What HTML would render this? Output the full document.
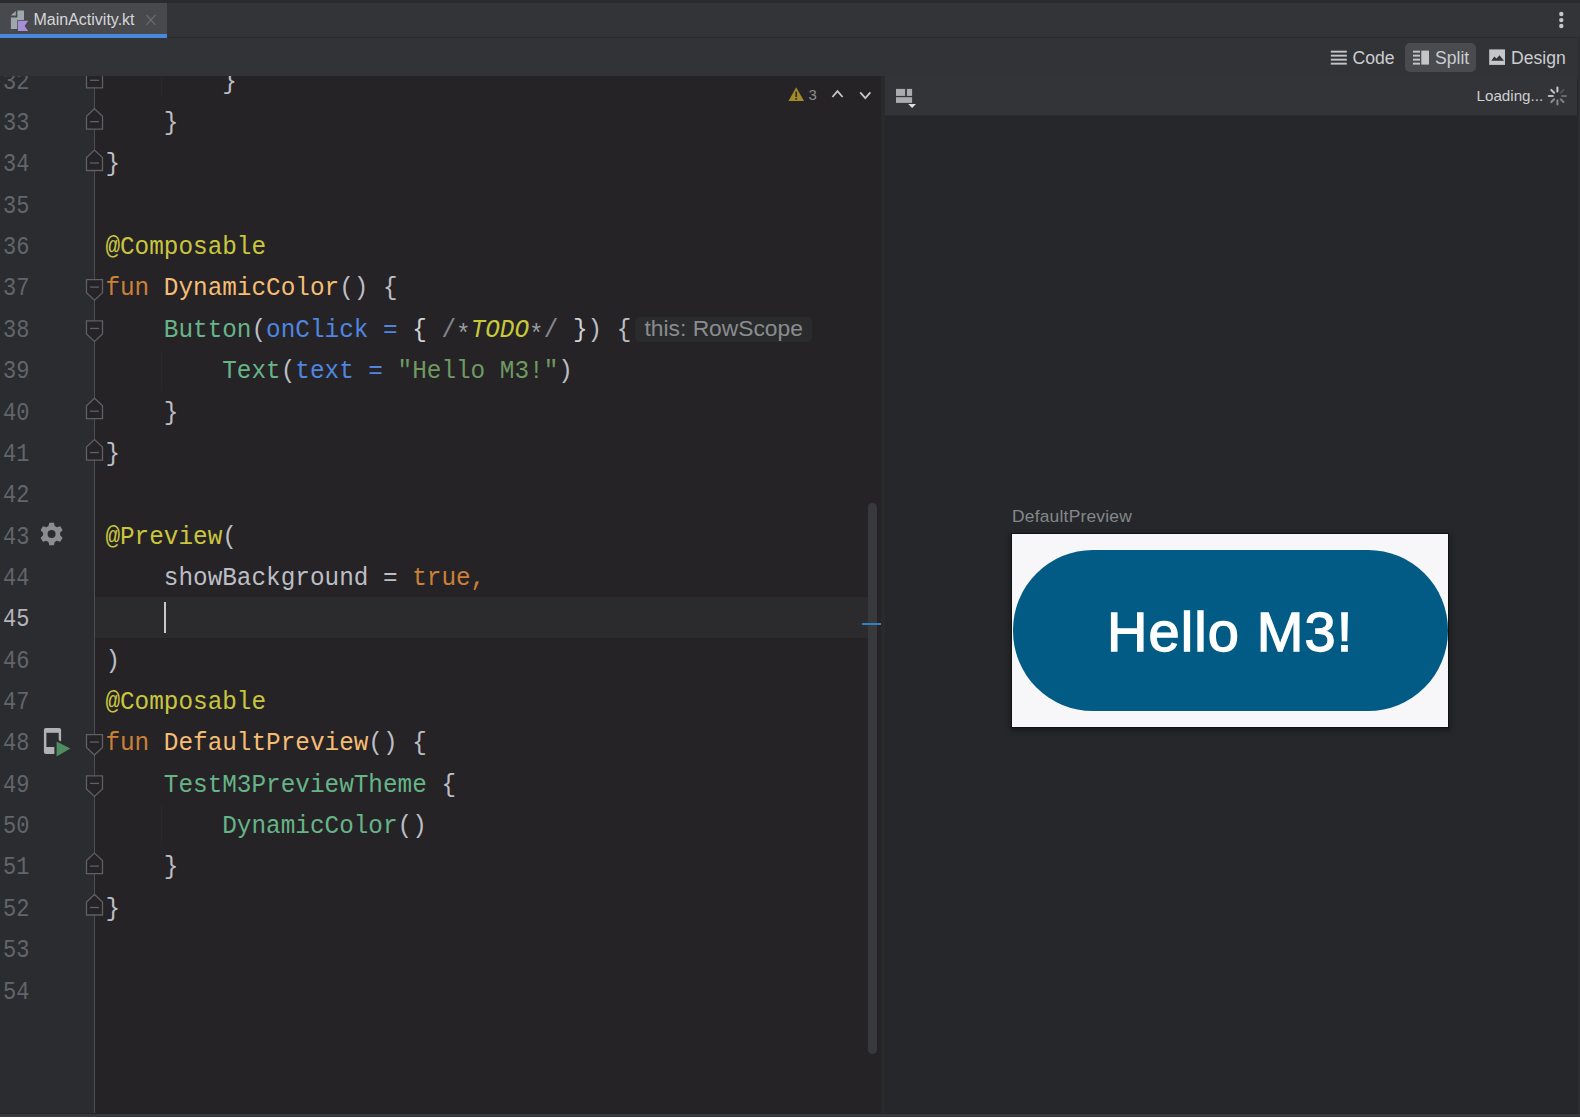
<!DOCTYPE html>
<html><head><meta charset="utf-8">
<style>
*{margin:0;padding:0;box-sizing:border-box}
html,body{width:1580px;height:1117px;overflow:hidden;background:#252326;font-family:"Liberation Sans",sans-serif;position:relative}
.abs{position:absolute}
#topbar{left:0;top:0;width:1580px;height:38px;background:#333438}
#topdark{left:0;top:0;width:1580px;height:3px;background:#2a2b2e}
#tab{left:0;top:3px;width:167px;height:35px;background:#48494c}
#tabline{left:0;top:34px;width:167px;height:4px;background:#4a88e0}
#tabtxt{left:33.5px;top:10.5px;font-size:16px;color:#d5d7da;white-space:nowrap;line-height:18px}
#toolbar{left:0;top:38px;width:1580px;height:38px;background:#323336}
#tbline{left:167px;top:37px;width:1413px;height:1px;background:#2b2c2f}
#editor{left:0;top:76px;width:881px;height:1037px;background:#252326;overflow:hidden}
#gutter{left:0;top:0;width:94px;height:1037px;background:#2b2c2f}
.ln{position:absolute;left:3px;font-family:"Liberation Mono",monospace;font-size:22px;color:#626569;line-height:41.36px;white-space:pre;transform:scaleY(1.18);transform-origin:0 20px}
.ln.cur{color:#b4b6b9}
.code{position:absolute;left:105.4px;font-family:"Liberation Mono",monospace;font-size:24.35px;color:#bcbec4;white-space:pre;line-height:41.36px;transform:scaleY(1.05);transform-origin:0 27.2px}
#curline{left:95px;top:521.3px;width:773px;height:40.6px;background:#2b2a2d}
#caret{left:163.5px;top:526px;width:2px;height:31px;background:#c8c8c8}
#divider{left:881px;top:76px;width:3.5px;height:1037px;background:#2a2a2d}
#right{left:885px;top:76px;width:695px;height:1037px;background:#26272a}
#ptool{left:884.5px;top:76px;width:692.5px;height:39.5px;background:#333438;border-bottom:1px solid #2b2c2f}
#rightedge{left:1578px;top:38px;width:2px;height:1076px;background:#2d2e31}
#bottom{left:0;top:1113.6px;width:1580px;height:3.4px;background:#37383b}
.p{color:#bcbec4}.k{color:#cc8038}.fn{color:#f5bd74}.an{color:#c9c63e}.cl{color:#66b488}.pn{color:#4f86e0}.st{color:#6e9a60}.cm{color:#85878b}.ast{color:#9a9ca0;position:relative;top:4.5px}.td{color:#c8c93a;font-style:italic}.br{color:#d0d2d6}
#hint{left:635px;top:317px;width:177px;height:24.5px;background:#2a2b2d;border-radius:5px}
#hinttxt{left:644.5px;top:316px;font-size:22.8px;color:#8a8c8f;line-height:24px;white-space:nowrap}
#scroll{left:868px;top:503px;width:9px;height:551px;background:#38393c;border-radius:5px}
#marker{left:862px;top:623px;width:19px;height:1.5px;background:#3281c4}
.ui{font-size:17.6px;color:#cbcdd0;white-space:nowrap;line-height:22px}
#btnsplit{left:1405px;top:42.5px;width:71px;height:29.5px;background:#4a4b4f;border-radius:5px}
#loading{left:1476.5px;top:87px;font-size:15.2px;color:#cdcfd2;line-height:18px;white-space:nowrap}
#warn3{left:808.5px;top:87px;font-size:15px;color:#8c8e91;line-height:16px}
#dpname{left:1012px;top:505.5px;font-size:17.4px;letter-spacing:0.22px;color:#85878a;line-height:20px;white-space:nowrap}
#card{left:1012px;top:533.8px;width:436px;height:193.2px;background:#f7f6f9;box-shadow:0 0 0 1px #111113, 0 2px 5px 2px rgba(0,0,0,0.35)}
#button{left:1012.5px;top:550px;width:435px;height:160.5px;background:#015b85;border-radius:80px}
#hello{left:1107px;top:601.5px;font-size:56px;color:#ffffff;line-height:60px;white-space:nowrap;-webkit-text-stroke:1.3px #fff;letter-spacing:1.1px}
</style></head><body>
<div id="topbar" class="abs"></div>
<div id="topdark" class="abs"></div>
<div id="tab" class="abs"></div>
<div id="tabline" class="abs"></div>
<svg class="abs" style="left:0;top:0" width="40" height="38">
  <path d="M10.9,15.6 L15.8,10.9 V15.6 Z" fill="#9ea7ad"/>
  <path d="M17.4,10.5 H24 V20.8 H18 V29.1 H10.9 V17.4 H17.4 Z" fill="#9ea7ad"/>
  <path d="M18,20.8 H28.2 L24.6,25.9 L28.2,30.9 H18 Z" fill="#a68fd9" stroke="#48494c" stroke-width="1.4" paint-order="stroke"/>
</svg>
<div id="tabtxt" class="abs">MainActivity.kt</div>
<svg class="abs" style="left:140px;top:8px" width="22" height="24"><path d="M6.4,7 L15.4,16.8 M15.4,7 L6.4,16.8" stroke="#6a6c6f" stroke-width="1.15"/></svg>
<svg class="abs" style="left:1550px;top:5px" width="24" height="28">
  <circle cx="11.3" cy="9" r="2.2" fill="#c5c7ca"/><circle cx="11.3" cy="15.1" r="2.2" fill="#c5c7ca"/><circle cx="11.3" cy="21" r="2.2" fill="#c5c7ca"/>
</svg>
<div id="toolbar" class="abs"></div>
<div id="tbline" class="abs"></div>
<div id="btnsplit" class="abs"></div>
<svg class="abs" style="left:1325px;top:44px" width="190" height="26">
  <g fill="#c4c6c9">
    <rect x="5.8" y="6.7" width="16" height="1.9"/><rect x="5.8" y="10.7" width="16" height="1.9"/><rect x="5.8" y="14.7" width="16" height="1.9"/><rect x="5.8" y="18.7" width="16" height="1.9"/>
    <rect x="88" y="6.7" width="7" height="1.9"/><rect x="88" y="10.7" width="7" height="1.9"/><rect x="88" y="14.7" width="7" height="1.9"/><rect x="88" y="18.7" width="7" height="1.9"/>
    <rect x="96.3" y="6.6" width="7.7" height="14"/>
    <rect x="164.2" y="5.4" width="15.8" height="15.5"/><path d="M166.3,16.8 L169.3,12.6 L171.5,14.5 L174.5,11.2 L179,16.8 Z" fill="#333438"/>
  </g>
</svg>
<div class="abs ui" style="left:1352.5px;top:46.5px">Code</div>
<div class="abs ui" style="left:1435px;top:46.5px">Split</div>
<div class="abs ui" style="left:1511px;top:46.5px">Design</div>
<div id="editor" class="abs">
  <div id="gutter" class="abs"></div>
  <div id="curline" class="abs"></div>
  <div id="caret" class="abs"></div>
  <div class="abs" style="left:160.5px;top:0;width:1px;height:22px;background:#29282b"></div>
  <div class="abs" style="left:160.5px;top:274px;width:1px;height:41px;background:#29282b"></div>
  <div class="abs" style="left:160.5px;top:729px;width:1px;height:41px;background:#29282b"></div>
  <svg class="abs" style="left:0;top:0" width="881" height="1041"><line x1="94.5" y1="0" x2="94.5" y2="1041" stroke="#4c4d50" stroke-width="1"/><path d="M86.5,11.80 H102.5 V-1.20 L94.5,-8.70 L86.5,-1.20 Z" fill="#252326" stroke="#5e6064" stroke-width="1.3"/><line x1="90" x2="99" y1="4.30" y2="4.30" stroke="#5e6064" stroke-width="1.3"/><path d="M86.5,53.16 H102.5 V40.16 L94.5,32.66 L86.5,40.16 Z" fill="#252326" stroke="#5e6064" stroke-width="1.3"/><line x1="90" x2="99" y1="45.66" y2="45.66" stroke="#5e6064" stroke-width="1.3"/><path d="M86.5,94.52 H102.5 V81.52 L94.5,74.02 L86.5,81.52 Z" fill="#252326" stroke="#5e6064" stroke-width="1.3"/><line x1="90" x2="99" y1="87.02" y2="87.02" stroke="#5e6064" stroke-width="1.3"/><path d="M86.5,203.60 H102.5 V216.60 L94.5,224.10 L86.5,216.60 Z" fill="#252326" stroke="#5e6064" stroke-width="1.3"/><line x1="90" x2="99" y1="211.10" y2="211.10" stroke="#5e6064" stroke-width="1.3"/><path d="M86.5,244.96 H102.5 V257.96 L94.5,265.46 L86.5,257.96 Z" fill="#252326" stroke="#5e6064" stroke-width="1.3"/><line x1="90" x2="99" y1="252.46" y2="252.46" stroke="#5e6064" stroke-width="1.3"/><path d="M86.5,342.68 H102.5 V329.68 L94.5,322.18 L86.5,329.68 Z" fill="#252326" stroke="#5e6064" stroke-width="1.3"/><line x1="90" x2="99" y1="335.18" y2="335.18" stroke="#5e6064" stroke-width="1.3"/><path d="M86.5,384.04 H102.5 V371.04 L94.5,363.54 L86.5,371.04 Z" fill="#252326" stroke="#5e6064" stroke-width="1.3"/><line x1="90" x2="99" y1="376.54" y2="376.54" stroke="#5e6064" stroke-width="1.3"/><path d="M86.5,658.56 H102.5 V671.56 L94.5,679.06 L86.5,671.56 Z" fill="#252326" stroke="#5e6064" stroke-width="1.3"/><line x1="90" x2="99" y1="666.06" y2="666.06" stroke="#5e6064" stroke-width="1.3"/><path d="M86.5,699.92 H102.5 V712.92 L94.5,720.42 L86.5,712.92 Z" fill="#252326" stroke="#5e6064" stroke-width="1.3"/><line x1="90" x2="99" y1="707.42" y2="707.42" stroke="#5e6064" stroke-width="1.3"/><path d="M86.5,797.64 H102.5 V784.64 L94.5,777.14 L86.5,784.64 Z" fill="#252326" stroke="#5e6064" stroke-width="1.3"/><line x1="90" x2="99" y1="790.14" y2="790.14" stroke="#5e6064" stroke-width="1.3"/><path d="M86.5,839.00 H102.5 V826.00 L94.5,818.50 L86.5,826.00 Z" fill="#252326" stroke="#5e6064" stroke-width="1.3"/><line x1="90" x2="99" y1="831.50" y2="831.50" stroke="#5e6064" stroke-width="1.3"/></svg>
  <div class="ln" style="top:-14.36px">32</div>
<div class="code" style="top:-14.36px"><span class="p">        }</span></div>
<div class="ln" style="top:27.00px">33</div>
<div class="code" style="top:27.00px"><span class="p">    }</span></div>
<div class="ln" style="top:68.36px">34</div>
<div class="code" style="top:68.36px"><span class="p">}</span></div>
<div class="ln" style="top:109.72px">35</div>
<div class="ln" style="top:151.08px">36</div>
<div class="code" style="top:151.08px"><span class="an">@Composable</span></div>
<div class="ln" style="top:192.44px">37</div>
<div class="code" style="top:192.44px"><span class="k">fun </span><span class="fn">DynamicColor</span><span class="p">() {</span></div>
<div class="ln" style="top:233.80px">38</div>
<div class="code" style="top:233.80px"><span class="p">    </span><span class="cl">Button</span><span class="p">(</span><span class="pn">onClick = </span><span class="br">{ </span><span class="cm">/</span><span class="ast">*</span><span class="td">TODO</span><span class="ast">*</span><span class="cm">/ </span><span class="br">}</span><span class="p">) {</span></div>
<div class="ln" style="top:275.16px">39</div>
<div class="code" style="top:275.16px"><span class="p">        </span><span class="cl">Text</span><span class="p">(</span><span class="pn">text = </span><span class="st">"Hello M3!"</span><span class="p">)</span></div>
<div class="ln" style="top:316.52px">40</div>
<div class="code" style="top:316.52px"><span class="p">    }</span></div>
<div class="ln" style="top:357.88px">41</div>
<div class="code" style="top:357.88px"><span class="p">}</span></div>
<div class="ln" style="top:399.24px">42</div>
<div class="ln" style="top:440.60px">43</div>
<div class="code" style="top:440.60px"><span class="an">@Preview</span><span class="p">(</span></div>
<div class="ln" style="top:481.96px">44</div>
<div class="code" style="top:481.96px"><span class="p">    showBackground = </span><span class="k">true,</span></div>
<div class="ln cur" style="top:523.32px">45</div>
<div class="ln" style="top:564.68px">46</div>
<div class="code" style="top:564.68px"><span class="p">)</span></div>
<div class="ln" style="top:606.04px">47</div>
<div class="code" style="top:606.04px"><span class="an">@Composable</span></div>
<div class="ln" style="top:647.40px">48</div>
<div class="code" style="top:647.40px"><span class="k">fun </span><span class="fn">DefaultPreview</span><span class="p">() {</span></div>
<div class="ln" style="top:688.76px">49</div>
<div class="code" style="top:688.76px"><span class="p">    </span><span class="cl">TestM3PreviewTheme</span><span class="p"> {</span></div>
<div class="ln" style="top:730.12px">50</div>
<div class="code" style="top:730.12px"><span class="p">        </span><span class="cl">DynamicColor</span><span class="p">()</span></div>
<div class="ln" style="top:771.48px">51</div>
<div class="code" style="top:771.48px"><span class="p">    }</span></div>
<div class="ln" style="top:812.84px">52</div>
<div class="code" style="top:812.84px"><span class="p">}</span></div>
<div class="ln" style="top:854.20px">53</div>
<div class="ln" style="top:895.56px">54</div>
</div>
<div id="hint" class="abs"></div>
<div id="hinttxt" class="abs">this: RowScope</div>
<div id="scroll" class="abs"></div>
<div id="marker" class="abs"></div>
<svg class="abs" style="left:0;top:700px" width="90" height="80">
  <rect x="43.9" y="28.1" width="17.2" height="25.8" rx="2" fill="#b0b2b5"/>
  <rect x="46.4" y="32.8" width="12.3" height="14.2" fill="#2b2c2f"/>
  <path d="M54.4,38 L74.5,48.5 L54.4,60 Z" fill="#2b2c2f"/>
  <path d="M56.6,41.4 L70.4,48.5 L56.6,56.4 Z" fill="#4f8c60"/>
</svg>
<svg class="abs" style="left:0;top:500px" width="90" height="70">
  <g transform="translate(51.6,34)">
    <path fill="#8a8e93" fill-rule="evenodd" d="M-3.13,-8.01 L-2.28,-11.37 L2.28,-11.37 L3.13,-8.01 L5.37,-6.71 L8.71,-7.67 L10.99,-3.71 L8.50,-1.30 L8.50,1.30 L10.99,3.71 L8.71,7.67 L5.37,6.71 L3.13,8.01 L2.28,11.37 L-2.28,11.37 L-3.13,8.01 L-5.37,6.71 L-8.71,7.67 L-10.99,3.71 L-8.50,1.30 L-8.50,-1.30 L-10.99,-3.71 L-8.71,-7.67 L-5.37,-6.71 Z M4.00,0 A4.0,4.0 0 1,0 -4.00,0 A4.0,4.0 0 1,0 4.00,0 Z"/>
  </g>
</svg>
<svg class="abs" style="left:780px;top:78px" width="100" height="34">
  <path d="M8.5,23.1 L16.2,9.2 L24,23.1 Z" fill="#a38b2c"/>
  <rect x="15.3" y="13.5" width="1.8" height="5.5" fill="#3a3320"/><rect x="15.3" y="20" width="1.8" height="1.8" fill="#3a3320"/>
  <path d="M52.4,19 L57.5,13.2 L62.6,19" fill="none" stroke="#c5c7ca" stroke-width="1.8"/>
  <path d="M80.2,14.4 L85.3,20.2 L90.4,14.4" fill="none" stroke="#c5c7ca" stroke-width="1.8"/>
</svg>
<div id="warn3" class="abs">3</div>
<div id="divider" class="abs"></div>
<div id="right" class="abs"></div>
<div id="ptool" class="abs"></div>
<svg class="abs" style="left:884px;top:78px" width="40" height="36">
  <g fill="#a9abae"><rect x="12" y="10.9" width="9.1" height="7"/><rect x="22.9" y="10.9" width="5.2" height="7"/><rect x="12" y="19.2" width="16.1" height="5.7"/></g>
  <path d="M24.2,26 H32 L28.1,30.1 Z" fill="#dcdfe2"/>
</svg>
<div id="loading" class="abs">Loading...</div>
<svg class="abs" style="left:1537px;top:76px" width="40" height="40" id="spinner"><line x1="20.40" y1="15.40" x2="20.40" y2="11.40" stroke="#c8cacd" stroke-opacity="1.0" stroke-width="2" stroke-linecap="round"/><line x1="23.65" y1="16.75" x2="26.48" y2="13.92" stroke="#c8cacd" stroke-opacity="0.2" stroke-width="2" stroke-linecap="round"/><line x1="25.00" y1="20.00" x2="29.00" y2="20.00" stroke="#c8cacd" stroke-opacity="0.35" stroke-width="2" stroke-linecap="round"/><line x1="23.65" y1="23.25" x2="26.48" y2="26.08" stroke="#c8cacd" stroke-opacity="0.5" stroke-width="2" stroke-linecap="round"/><line x1="20.40" y1="24.60" x2="20.40" y2="28.60" stroke="#c8cacd" stroke-opacity="0.55" stroke-width="2" stroke-linecap="round"/><line x1="17.15" y1="23.25" x2="14.32" y2="26.08" stroke="#c8cacd" stroke-opacity="0.6" stroke-width="2" stroke-linecap="round"/><line x1="15.80" y1="20.00" x2="11.80" y2="20.00" stroke="#c8cacd" stroke-opacity="0.9" stroke-width="2" stroke-linecap="round"/><line x1="17.15" y1="16.75" x2="14.32" y2="13.92" stroke="#c8cacd" stroke-opacity="0.95" stroke-width="2" stroke-linecap="round"/></svg>
<div id="rightedge" class="abs"></div>
<div id="dpname" class="abs">DefaultPreview</div>
<div id="card" class="abs"></div>
<div id="button" class="abs"></div>
<div id="hello" class="abs">Hello M3!</div>
<div id="bottom" class="abs"></div>
</body></html>
